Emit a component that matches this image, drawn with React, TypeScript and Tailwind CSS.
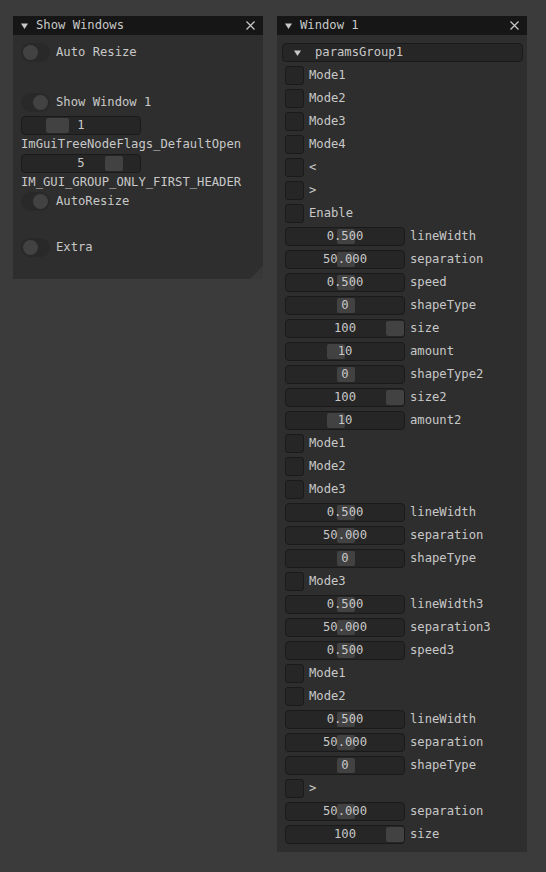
import type { ReactNode } from "react";

const FONT = "font-['DejaVu_Sans_Mono','Liberation_Mono',monospace] text-[12.2px]";

type Row =
  | { kind: "check"; label: string }
  | { kind: "slider"; value: string; label: string; grab: [number, number] };

// grab = [left offset, width] inside the 120px frame
const mid: [number, number] = [51, 18];
const end: [number, number] = [100, 18];
const low: [number, number] = [41, 18];

const rows: Row[] = [
  { kind: "check", label: "Mode1" },
  { kind: "check", label: "Mode2" },
  { kind: "check", label: "Mode3" },
  { kind: "check", label: "Mode4" },
  { kind: "check", label: "<" },
  { kind: "check", label: ">" },
  { kind: "check", label: "Enable" },
  { kind: "slider", value: "0.500", label: "lineWidth", grab: mid },
  { kind: "slider", value: "50.000", label: "separation", grab: mid },
  { kind: "slider", value: "0.500", label: "speed", grab: mid },
  { kind: "slider", value: "0", label: "shapeType", grab: mid },
  { kind: "slider", value: "100", label: "size", grab: end },
  { kind: "slider", value: "10", label: "amount", grab: low },
  { kind: "slider", value: "0", label: "shapeType2", grab: mid },
  { kind: "slider", value: "100", label: "size2", grab: end },
  { kind: "slider", value: "10", label: "amount2", grab: low },
  { kind: "check", label: "Mode1" },
  { kind: "check", label: "Mode2" },
  { kind: "check", label: "Mode3" },
  { kind: "slider", value: "0.500", label: "lineWidth", grab: mid },
  { kind: "slider", value: "50.000", label: "separation", grab: mid },
  { kind: "slider", value: "0", label: "shapeType", grab: mid },
  { kind: "check", label: "Mode3" },
  { kind: "slider", value: "0.500", label: "lineWidth3", grab: mid },
  { kind: "slider", value: "50.000", label: "separation3", grab: mid },
  { kind: "slider", value: "0.500", label: "speed3", grab: mid },
  { kind: "check", label: "Mode1" },
  { kind: "check", label: "Mode2" },
  { kind: "slider", value: "0.500", label: "lineWidth", grab: mid },
  { kind: "slider", value: "50.000", label: "separation", grab: mid },
  { kind: "slider", value: "0", label: "shapeType", grab: mid },
  { kind: "check", label: ">" },
  { kind: "slider", value: "50.000", label: "separation", grab: mid },
  { kind: "slider", value: "100", label: "size", grab: end },
];

function Arrow() {
  return (
    <svg width="7" height="6" viewBox="0 0 7 6" className="shrink-0">
      <path d="M0 0.5 H7 L3.5 6 Z" fill="#c8c8c8" />
    </svg>
  );
}

function CloseX() {
  return (
    <svg width="9" height="9" viewBox="0 0 9 9">
      <path d="M0.5 0.5 L8.5 8.5 M8.5 0.5 L0.5 8.5" stroke="#c8c8c8" strokeWidth="1.2" />
    </svg>
  );
}

function Window({ title, className, children }: { title: string; className: string; children: ReactNode }) {
  return (
    <section className={`relative flex w-[250px] flex-col bg-[#2e2e2e] ${className}`}>
      <header className="flex h-[19px] items-center bg-[#161616] pl-[8px] pr-[8px]">
        <Arrow />
        <span className="ml-[8px] leading-none">{title}</span>
        <span className="ml-auto flex">
          <CloseX />
        </span>
      </header>
      {children}
    </section>
  );
}

function Toggle({ on, label }: { on: boolean; label: string }) {
  return (
    <div className="flex h-[19px] items-center">
      <div className="relative h-[19px] w-[29px] rounded-full bg-[#292929]">
        <div
          className={`absolute top-[2px] h-[15px] w-[15px] rounded-full bg-[#424242] ${
            on ? "left-[12px]" : "left-[2px]"
          }`}
        />
      </div>
      <span className="ml-[6px]">{label}</span>
    </div>
  );
}

function Slider({ value, grab }: { value: string; grab: [number, number] }) {
  return (
    <div className="relative flex h-[19px] w-[120px] shrink-0 items-center justify-center rounded-[4px] border border-[#1a1a1a] bg-[#262626]">
      <div
        className="absolute top-[1px] h-[15px] rounded-[2px] bg-[#424242]"
        style={{ left: grab[0], width: grab[1] }}
      />
      <span className="relative leading-none">{value}</span>
    </div>
  );
}

function Checkbox({ label }: { label: string }) {
  return (
    <div className="flex h-[19px] items-center">
      <div className="h-[19px] w-[19px] rounded-[3px] border border-[#1a1a1a] bg-[#262626]" />
      <span className="ml-[5px]">{label}</span>
    </div>
  );
}

export default function App() {
  return (
    <main className={`min-h-[872px] w-[546px] bg-[#3b3b3b] text-[#c8c8c8] ${FONT}`}>
      <div className="flex items-start gap-[14px] pl-[13px] pt-[16px]">
        <Window title="Show Windows" className="h-[263px]">
          <div className="flex flex-col gap-[4px] px-[8px] pt-[8px]">
            <Toggle on={false} label="Auto Resize" />
            <div className="h-[23px]" />
            <Toggle on label="Show Window 1" />
            <Slider value="1" grab={[24, 23]} />
            <div className="flex h-[11px] items-center whitespace-nowrap">ImGuiTreeNodeFlags_DefaultOpen</div>
            <Slider value="5" grab={[83, 18]} />
            <div className="flex h-[11px] items-center whitespace-nowrap">IM_GUI_GROUP_ONLY_FIRST_HEADER</div>
            <Toggle on label="AutoResize" />
            <div className="h-[19px]" />
            <Toggle on={false} label="Extra" />
          </div>
          <svg className="absolute bottom-0 right-0" width="13" height="13" viewBox="0 0 13 13">
            <path d="M13 0 V13 H0 Z" fill="#383838" />
          </svg>
        </Window>

        <Window title="Window 1" className="h-[836px]">
          <div className="flex flex-col gap-[4px] px-[8px] pb-[8px] pt-[8px]">
            <div className="-ml-[3px] -mr-[4px] flex h-[19px] items-center rounded-[4px] border border-[#1a1a1a] bg-[#262626] pl-[11px]">
              <Arrow />
              <span className="ml-[14px]">paramsGroup1</span>
            </div>
            {rows.map((row, i) =>
              row.kind === "check" ? (
                <Checkbox key={i} label={row.label} />
              ) : (
                <div className="flex h-[19px] items-center" key={i}>
                  <Slider value={row.value} grab={row.grab} />
                  <span className="ml-[5px]">{row.label}</span>
                </div>
              )
            )}
          </div>
        </Window>
      </div>
    </main>
  );
}
